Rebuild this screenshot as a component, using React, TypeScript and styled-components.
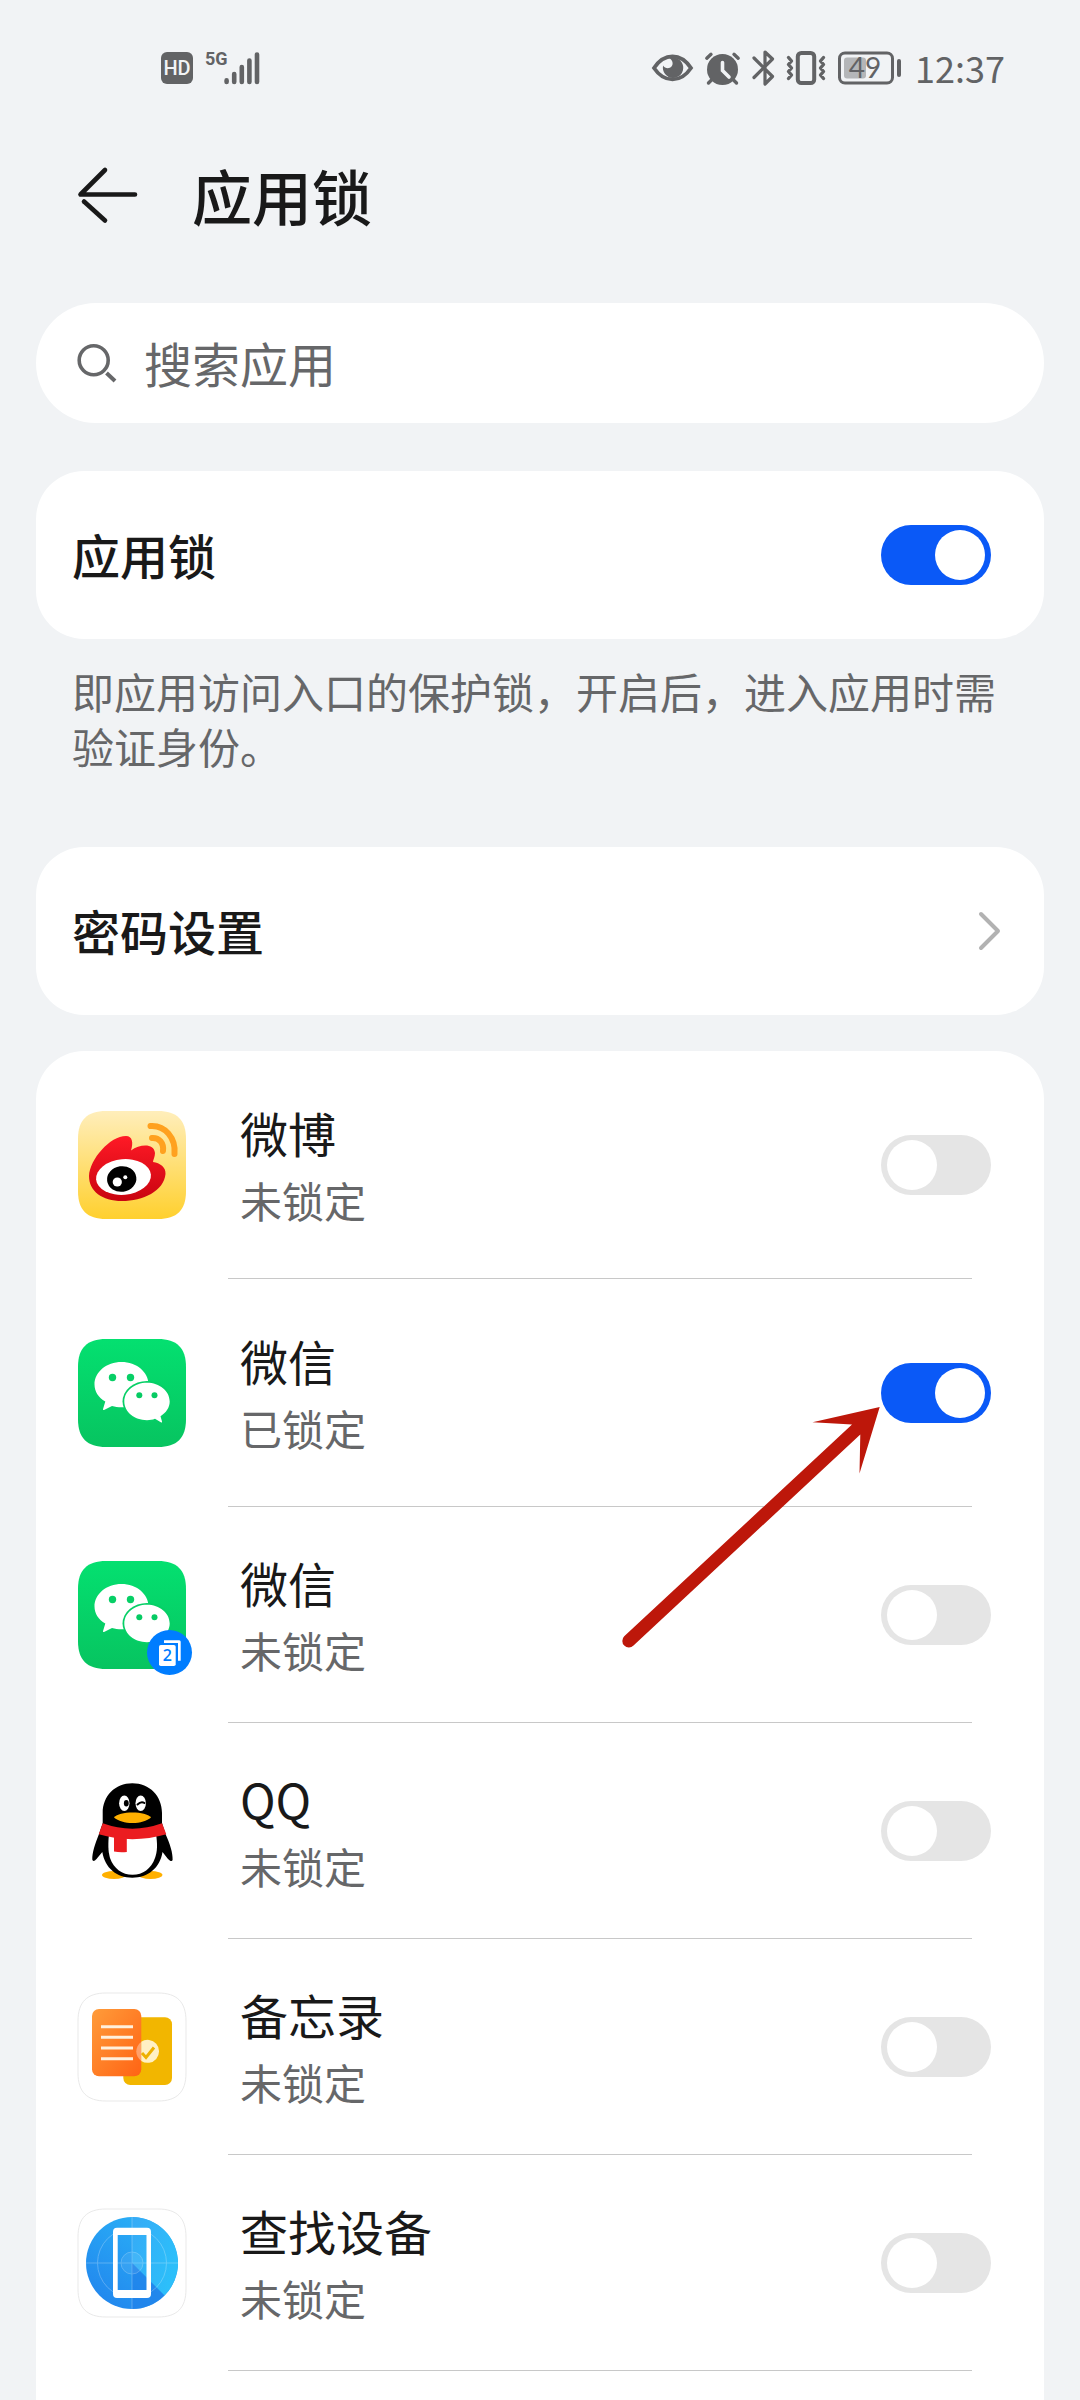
import React, { useState } from 'react';
import styled, { createGlobalStyle, css } from 'styled-components';

const colors = {
  page: '#f1f3f5',
  card: '#ffffff',
  text: '#191919',
  muted: '#666769',
  status: '#626365',
  divider: '#c8c8c8',
  accent: '#0a59f7',
  off: '#e5e5e5',
};

const GlobalStyle = createGlobalStyle`
  * { box-sizing: border-box; }
  body {
    margin: 0;
    background: ${colors.page};
    color: ${colors.text};
    font-family: "Noto Sans CJK SC", "Noto Sans", sans-serif;
  }
  svg { display: block; flex: none; overflow: visible; }
`;

const Page = styled.div`
  display: flex;
  flex-direction: column;
  min-height: 100vh;
`;

const StatusBar = styled.div`
  display: flex;
  align-items: center;
  justify-content: space-between;
  height: 136px;
  padding: 0 75px 0 161px;
  color: ${colors.status};
`;

const StatusGroup = styled.div`
  display: flex;
  align-items: center;
  gap: 12px;
`;

const HdBadge = styled.span`
  width: 32px;
  height: 32px;
  border-radius: 6px;
  background: ${colors.status};
  color: ${colors.page};
  font: 500 20px/32px Roboto, sans-serif;
  text-align: center;
`;

const Signal = styled.div`
  display: flex;
  height: 34px;
`;

const Generation = styled.span`
  margin-right: -4px;
  font: 700 18px/16px Roboto, sans-serif;
`;

const Clock = styled.time`
  font-size: 36px;
  line-height: 48px;
  margin-left: 2px;
  padding-bottom: 2px;
`;

const Header = styled.header`
  display: flex;
  align-items: center;
  gap: 54px;
  height: 118px;
  padding: 0 78px;
`;

const BackButton = styled.button`
  padding: 0;
  border: 0;
  background: none;
  color: inherit;
`;

const Title = styled.h1`
  margin: 0;
  font-size: 60px;
  line-height: 80px;
  font-weight: 500;
`;

const Main = styled.main`
  flex: 1;
  display: flex;
  flex-direction: column;
  padding: 49px 36px 0;
`;

const SearchBox = styled.label`
  display: flex;
  align-items: center;
  gap: 27px;
  height: 120px;
  padding: 0 41px;
  border-radius: 60px;
  background: ${colors.card};
  color: ${colors.muted};
`;

const SearchInput = styled.input`
  flex: 1;
  min-width: 0;
  padding: 0 0 3px;
  border: 0;
  outline: 0;
  background: none;
  color: ${colors.text};
  font-family: inherit;
  font-size: 48px;
  line-height: 64px;
  &::placeholder {
    color: ${colors.muted};
    opacity: 1;
  }
`;

const cardShape = css`
  display: flex;
  align-items: center;
  justify-content: space-between;
  width: 100%;
  height: 168px;
  border-radius: 48px;
  background: ${colors.card};
`;

const SettingCard = styled.div`
  ${cardShape}
  margin-top: 48px;
  padding: 0 53px 0 36px;
`;

const LinkCard = styled.button`
  ${cardShape}
  padding: 0 42px 0 36px;
  border: 0;
  color: inherit;
  font: inherit;
`;

const settingFont = css`
  padding-bottom: 3px;
  font-size: 48px;
  line-height: 64px;
  font-weight: 500;
`;

const SettingLabel = styled.label`
  ${settingFont}
`;

const SettingText = styled.span`
  ${settingFont}
`;

const Description = styled.p`
  margin: 24px 36px 74px;
  color: ${colors.muted};
  font-size: 42px;
  line-height: 55px;
`;

const AppList = styled.ul`
  flex: 1;
  list-style: none;
  margin: 36px 0 0;
  padding: 0;
  border-radius: 48px 48px 0 0;
  background: ${colors.card};
`;

const AppRow = styled.li<{ $tall?: boolean }>`
  position: relative;
  display: flex;
  align-items: center;
  height: ${(p) => (p.$tall ? 228 : 216)}px;
  padding: 0 53px 0 42px;
  &::after {
    content: '';
    position: absolute;
    left: 192px;
    right: 72px;
    bottom: 0;
    height: 1px;
    background: ${colors.divider};
  }
`;

const AppText = styled.label`
  flex: 1;
  display: flex;
  flex-direction: column;
  gap: 10px;
  margin-left: 54px;
`;

const AppName = styled.span`
  font-size: 48px;
  line-height: 60px;
`;

const AppState = styled.span`
  color: ${colors.muted};
  font-size: 42px;
  line-height: 56px;
`;

const Switch = styled.input.attrs({ type: 'checkbox', role: 'switch' })`
  appearance: none;
  flex: none;
  display: flex;
  align-items: center;
  width: 110px;
  height: 60px;
  margin: 0;
  padding: 0 6px;
  border-radius: 30px;
  background: ${colors.off};
  &::before {
    content: '';
    width: 50px;
    height: 50px;
    border-radius: 50%;
    background: #fff;
  }
  &:checked {
    justify-content: flex-end;
    background: ${colors.accent};
  }
`;

const Pointer = styled.svg`
  position: absolute;
  z-index: 1;
  top: 126px;
  right: 164px;
  pointer-events: none;
`;

/* ---------- status icons ---------- */

const SignalBars = () => (
  <svg width="36" height="34" viewBox="0 0 36 34" stroke="currentColor" strokeWidth="4.6" strokeLinecap="round">
    <path d="M2.6 29.4v1.6M10.2 23v8M17.8 16v15M25.4 9.5v21.5M33 3.5v27.5" />
  </svg>
);

const EyeIcon = () => (
  <svg width="41" height="28" viewBox="0 0 41 28">
    <path d="M2 14C6 8 12 2.4 20.5 2.4S35 8 39 14C35 20 29 25.4 20.5 25.4S6 20 2 14Z" fill="none" stroke="currentColor" strokeWidth="3.8" />
    <path d="M17.5 4.2a10.2 10.2 0 1 1-6.4 7.4c1.6 3 6.2 3.6 8.4 1 2.2-2.8 1-6.6-2-8.4Z" fill="currentColor" />
  </svg>
);

const AlarmIcon = () => (
  <svg width="35" height="33" viewBox="0 0 35 33" fill="none" strokeLinecap="round">
    <circle cx="17.5" cy="17.5" r="15.5" fill="currentColor" />
    <path d="M1.8 6.2 6 2.3M33.2 6.2 29 2.3M6.5 28l-3 3M28.5 28l3 3" stroke="currentColor" strokeWidth="3.4" />
    <path d="M17.5 10.5v8l6.5 6.5" stroke={colors.page} strokeWidth="3.6" />
  </svg>
);

const BluetoothIcon = () => (
  <svg width="22" height="36" viewBox="0 0 22 36" fill="none" stroke="currentColor" strokeWidth="3.2" strokeLinecap="round" strokeLinejoin="round">
    <path d="M2 8 20.5 26.5 13 34V2l7.5 7L2 27.5" />
  </svg>
);

const VibrateIcon = () => (
  <svg width="40" height="34" viewBox="0 0 40 34" fill="none" stroke="currentColor" strokeLinejoin="round" strokeLinecap="round">
    <rect x="11.8" y="2" width="16.4" height="30" rx="3.5" strokeWidth="4" />
    <path d="M2.5 6.5 5.5 10l-3 3.5 3 3.5-3 3.5 3 3.5-3 3.5M37.5 6.5l-3 3.5 3 3.5-3 3.5 3 3.5-3 3.5 3 3.5" strokeWidth="3.4" />
  </svg>
);

const BatteryIcon = () => (
  <svg width="63" height="34" viewBox="0 0 63 34">
    <rect x="1.5" y="2" width="53" height="30" rx="5.5" fill="none" stroke="currentColor" strokeWidth="3" />
    <rect x="6" y="6.5" width="22" height="21" rx="3" fill="#b4b6b8" />
    <path d="M61 10v14" stroke="currentColor" strokeWidth="4" strokeLinecap="round" />
    <text x="27" y="27" textAnchor="middle" fontFamily="Lato, sans-serif" fontSize="28" fill="currentColor">49</text>
  </svg>
);

/* ---------- interface icons ---------- */

const BackIcon = () => (
  <svg width="60" height="56" viewBox="0 0 60 56" fill="none" stroke="currentColor" strokeWidth="4.6" strokeLinecap="round" strokeLinejoin="round">
    <path d="M27 3 2.5 27.5H57" />
    <path d="M6 34.5 27 53.5" />
  </svg>
);

const SearchIcon = () => (
  <svg width="40" height="40" viewBox="0 0 40 40" fill="none" stroke="currentColor" strokeWidth="3.6">
    <circle cx="16.7" cy="17.3" r="14.5" />
    <path d="m29.5 30 8.5 8" strokeWidth="4" />
  </svg>
);

const ChevronIcon = () => (
  <svg width="24" height="40" viewBox="0 0 24 40" fill="none" stroke="#b2b2b2" strokeWidth="4" strokeLinecap="round" strokeLinejoin="round">
    <path d="m3 3 17 17L3 37" />
  </svg>
);

/* ---------- application icons ---------- */

const tile = 'M28 0H80C99 0 108 9 108 28V80C108 99 99 108 80 108H28C9 108 0 99 0 80V28C0 9 9 0 28 0Z';

const AppIcon = ({ children }: { children: React.ReactNode }) => (
  <svg width="108" height="108" viewBox="0 0 108 108" aria-hidden="true">{children}</svg>
);

const WeiboIcon = () => (
  <AppIcon>
    <defs>
      <linearGradient id="weiboTile" x1="0" y1="0" x2="0" y2="1">
        <stop offset="0" stopColor="#ffeebb" />
        <stop offset="1" stopColor="#ffd02e" />
      </linearGradient>
      <linearGradient id="weiboFace" x1="0" y1="0" x2="0" y2="1">
        <stop offset="0" stopColor="#ff1a26" />
        <stop offset="1" stopColor="#c90410" />
      </linearGradient>
    </defs>
    <path d={tile} fill="url(#weiboTile)" />
    <path d="M11 65C12 48 32 25 48 25C54.5 25 55.500 32 53 39.5C62 33 76 32 77 42C77 46 75 49 75 51C82 52 88 56 87.5 63C86 80 65 90 44 90C24 90 11 80 11 65Z" fill="url(#weiboFace)" />
    <ellipse cx="45.5" cy="66" rx="27.5" ry="17.8" fill="#fff" transform="rotate(-5 45.5 66)" />
    <ellipse cx="43.7" cy="68" rx="14.7" ry="12.8" fill="#000" transform="rotate(-8 43.7 68)" />
    <circle cx="39.3" cy="71" r="4.6" fill="#fff" />
    <circle cx="47.3" cy="66.3" r="2" fill="#fff" />
    <path d="M72.5 15C87 14 98 27 96.5 43M74 27C81 26.5 86 32 85 40" fill="none" stroke="#ffa11f" strokeWidth="6" strokeLinecap="round" />
  </AppIcon>
);

const WeChatIcon = ({ id, twin }: { id: string; twin?: boolean }) => (
  <AppIcon>
    <defs>
      <linearGradient id={id} x1="0" y1="0" x2="0" y2="1">
        <stop offset="0" stopColor="#04e070" />
        <stop offset="1" stopColor="#07c460" />
      </linearGradient>
    </defs>
    <path d={tile} fill={`url(#${id})`} />
    <path d="M43.5 23C58.5 23 70.5 33 70.5 45.5S58.5 68.3 43.5 68.3C40 68.3 37 67.8 34 67L26.5 70.8C25 71.5 24.8 70.5 25.2 69.5L27.3 62.5C20.5 58.5 16.5 52.5 16.5 45.5C16.5 33 28.5 23 43.5 23Z" fill="#fff" />
    <circle cx="34.5" cy="38.5" r="3.7" fill="#07cf66" />
    <circle cx="52.5" cy="38.5" r="3.7" fill="#07cf66" />
    <ellipse cx="69" cy="62.5" rx="24.5" ry="20.5" fill="#06cf66" />
    <path d="M69 43.8C81.5 43.8 91.7 52 91.7 62.5C91.7 68.5 88 73.8 82.5 77.2L84 82.5C84.2 83.5 83.5 83.8 82.8 83.3L77 79.8C74.5 80.8 72 81.2 69 81.2C56.5 81.2 46.3 73 46.3 62.5S56.5 43.8 69 43.8Z" fill="#fff" />
    <circle cx="61.3" cy="56.3" r="3" fill="#06cb63" />
    <circle cx="76.5" cy="56.3" r="3" fill="#06cb63" />
    {twin && (
      <g>
        <circle cx="91.5" cy="91.5" r="22.5" fill="#007dff" />
        <path d="M86 79.2H101.2Q102.7 79.2 102.7 80.7V99.7H100V81.9H86Z" fill="#fff" />
        <rect x="81" y="84" width="16.7" height="21" rx="1.8" fill="#fff" />
        <text x="89.3" y="100.3" textAnchor="middle" fontFamily="'Open Sans', sans-serif" fontSize="16" fontWeight="600" fill="#007dff">2</text>
      </g>
    )}
  </AppIcon>
);

const QQIcon = () => (
  <AppIcon>
    <ellipse cx="36" cy="98" rx="12" ry="4" fill="#ffb000" />
    <ellipse cx="72.5" cy="98" rx="12" ry="4" fill="#ffb000" />
    <path d="M24.7 46V36C24.7 19 37 6.3 54.3 6.3S84 19 84 36V46L87.5 57C92 67 95 76 94.6 83C94 85 92 84 90 82L84.5 75C82 91 70 100.7 54.3 100.7S27 91 24.3 75L18.5 82C16.5 84.5 14.6 84.5 14.3 82.5C14 76 17 67 21 57Z" fill="#000" />
    <path d="M31 57H78C79.5 67 79.5 74 77 81C73 92 65 97.7 54.5 97.7S36 92 32 81C30 74 30 67 31 57Z" fill="#fff" />
    <path d="M24.7 46.3Q54.3 57 84 46.3L88.3 57.3Q54.3 67 20.8 57.3Z" fill="#eb1c20" />
    <path d="M36 58H48.8V75Q42 75.8 36 74.5Z" fill="#eb1c20" />
    <path d="M36 40.5C39 37 46 35.5 54.5 35.5S70 37 73 40.5C69 44 62 46 54.5 46S40 44 36 40.5Z" fill="#ffb000" />
    <ellipse cx="46.3" cy="26.3" rx="5.2" ry="7.8" fill="#fff" />
    <ellipse cx="62.7" cy="26.3" rx="5.2" ry="7.8" fill="#fff" />
    <ellipse cx="48.3" cy="26.3" rx="2.4" ry="3.2" fill="#000" />
    <path d="M59.5 27.5Q63 24 66.5 26" fill="none" stroke="#000" strokeWidth="2" strokeLinecap="round" />
  </AppIcon>
);

const MemoIcon = () => (
  <AppIcon>
    <defs>
      <linearGradient id="memoSheet" x1="0" y1="0" x2="1" y2="1">
        <stop offset="0" stopColor="#ff9c3a" />
        <stop offset="1" stopColor="#ff6314" />
      </linearGradient>
    </defs>
    <path d={tile} fill="#fff" stroke="#e9e9e9" />
    <rect x="45.3" y="24.3" width="48.7" height="67.7" rx="7" fill="#f2b600" />
    <rect x="14" y="16" width="49.3" height="67.3" rx="7" fill="url(#memoSheet)" />
    <path d="M63.3 49A11.5 11.5 0 0 0 63.3 68Z" fill="#fff" opacity=".35" />
    <path d="M63.3 48.7A11.5 11.5 0 1 1 63.3 68Z" fill="#fff0c4" />
    <path d="m64 60 4 4.5 8-10" fill="none" stroke="#eeb000" strokeWidth="3" />
    <path d="M23 33.7H55M23 44.3H55M23 55H55M23 65.7H55" stroke="#fff0dc" strokeWidth="3" />
  </AppIcon>
);

const FindDeviceIcon = () => (
  <AppIcon>
    <defs>
      <linearGradient id="radar" x1="1" y1="0" x2="0.3" y2="1">
        <stop offset="0" stopColor="#2bb8f8" />
        <stop offset="1" stopColor="#2288ee" />
      </linearGradient>
      <linearGradient id="radarSweep" x1="0" y1="0" x2="1" y2="0.5">
        <stop offset="0" stopColor="#36aaf6" />
        <stop offset="1" stopColor="#2cbffa" />
      </linearGradient>
    </defs>
    <path d={tile} fill="#fff" stroke="#e9e9e9" />
    <circle cx="54" cy="54" r="46" fill="url(#radar)" />
    <path d="M54 54V8A46 46 0 0 1 86.5 86.5Z" fill="url(#radarSweep)" />
    <path d="M54 54 86.5 86.5A46 46 0 0 1 54 100Z" fill="#1f80ea" opacity=".7" />
    <g fill="none" stroke="#fff" opacity=".25">
      <circle cx="54" cy="54" r="11" fill="#fff" fillOpacity=".3" />
      <circle cx="54" cy="54" r="34.5" />
      <path d="M8 54H100M54 8V100" />
    </g>
    <path fillRule="evenodd" d="M39 18.7H69Q73 18.7 73 22.7V85Q73 89 69 89H39Q35 89 35 85V22.7Q35 18.7 39 18.7ZM39.7 26V81H68.5V26Z" fill="#fff" />
  </AppIcon>
);

/* ---------- data ---------- */

interface AppEntry {
  id: string;
  name: string;
  icon: React.ReactNode;
  locked?: boolean;
  tall?: boolean;
  highlighted?: boolean;
}

const apps: AppEntry[] = [
  { id: 'weibo', name: '微博', icon: <WeiboIcon />, tall: true },
  { id: 'wechat', name: '微信', icon: <WeChatIcon id="wechatTile" />, locked: true, tall: true, highlighted: true },
  { id: 'wechat-twin', name: '微信', icon: <WeChatIcon id="wechatTwinTile" twin /> },
  { id: 'qq', name: 'QQ', icon: <QQIcon /> },
  { id: 'memo', name: '备忘录', icon: <MemoIcon /> },
  { id: 'find-device', name: '查找设备', icon: <FindDeviceIcon /> },
];

function AppItem({ app }: { app: AppEntry }) {
  const [locked, setLocked] = useState(Boolean(app.locked));
  return (
    <AppRow $tall={app.tall}>
      {app.icon}
      <AppText htmlFor={app.id}>
        <AppName>{app.name}</AppName>
        <AppState>{locked ? '已锁定' : '未锁定'}</AppState>
      </AppText>
      <Switch id={app.id} checked={locked} onChange={(e) => setLocked(e.target.checked)} />
      {app.highlighted && (
        <Pointer width="260" height="245" viewBox="0 0 260 245" aria-hidden="true">
          <path d="M259.7 2 192.5 17.3 232 19.5 4.2 231.3A6.5 6.5 0 0 0 13.5 240.5L240.3 29.5 239.5 68.5Z" fill="#bd170a" />
        </Pointer>
      )}
    </AppRow>
  );
}

export default function App() {
  const [enabled, setEnabled] = useState(true);
  return (
    <Page>
      <GlobalStyle />
      <StatusBar>
        <StatusGroup>
          <HdBadge>HD</HdBadge>
          <Signal>
            <Generation>5G</Generation>
            <SignalBars />
          </Signal>
        </StatusGroup>
        <StatusGroup>
          <EyeIcon />
          <AlarmIcon />
          <BluetoothIcon />
          <VibrateIcon />
          <BatteryIcon />
          <Clock>12:37</Clock>
        </StatusGroup>
      </StatusBar>
      <Header>
        <BackButton type="button" aria-label="返回">
          <BackIcon />
        </BackButton>
        <Title>应用锁</Title>
      </Header>
      <Main>
        <SearchBox>
          <SearchIcon />
          <SearchInput type="text" placeholder="搜索应用" aria-label="搜索应用" />
        </SearchBox>
        <SettingCard>
          <SettingLabel htmlFor="app-lock">应用锁</SettingLabel>
          <Switch id="app-lock" checked={enabled} onChange={(e) => setEnabled(e.target.checked)} />
        </SettingCard>
        <Description>即应用访问入口的保护锁，开启后，进入应用时需验证身份。</Description>
        <LinkCard type="button">
          <SettingText>密码设置</SettingText>
          <ChevronIcon />
        </LinkCard>
        <AppList>
          {apps.map((app) => (
            <AppItem key={app.id} app={app} />
          ))}
        </AppList>
      </Main>
    </Page>
  );
}
